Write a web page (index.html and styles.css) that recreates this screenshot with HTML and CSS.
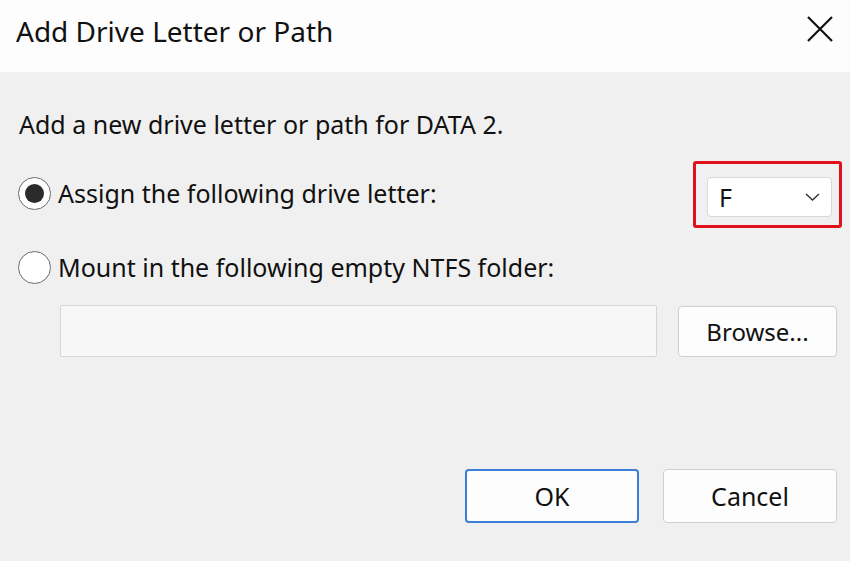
FILE: index.html
```html
<!DOCTYPE html>
<html>
<head>
    <title>Add Drive Letter or Path</title>
    <link rel="stylesheet" href="styles.css">
</head>
<body>
<div class="dialog">

    <!-- Title bar -->
    <div class="titlebar">
        <span class="title">Add Drive Letter or Path</span>
        <svg class="close" width="26" height="26" viewBox="0 0 26 26">
            <path d="M1 1 L25 25 M25 1 L1 25" stroke="#111" stroke-width="2.2" fill="none"/>
        </svg>
    </div>

    <div class="content">
        <p class="intro">Add a new drive letter or path for DATA 2.</p>

        <div class="row">
            <label class="option">
                <span class="radio checked"></span>
                Assign the following drive letter:
            </label>
            <div class="highlight">
                <div class="select">
                    <span>F</span>
                    <svg width="15" height="8" viewBox="0 0 15 8">
                        <path d="M1 1 L7.5 7 L14 1" stroke="#333" stroke-width="1.4" fill="none"/>
                    </svg>
                </div>
            </div>
        </div>

        <div class="row">
            <label class="option">
                <span class="radio"></span>
                Mount in the following empty NTFS folder:
            </label>
        </div>

        <div class="path-row">
            <div class="path-input"></div>
            <button class="btn browse">Browse...</button>
        </div>

        <div class="actions">
            <button class="btn primary">OK</button>
            <button class="btn">Cancel</button>
        </div>
    </div>
</div>
</body>
</html>
```

FILE: styles.css
```css
body {
    margin: 0;
    font-family: "Noto Sans", "Open Sans", sans-serif;
    color: #111;
    background-color: #f0f0f0;
}

.dialog {
    width: 850px;
    height: 561px;
    display: flex;
    flex-direction: column;
}

/* Title bar */
.titlebar {
    height: 72px;
    background-color: #fdfdfd;
    display: flex;
    align-items: center;
    justify-content: space-between;
    padding: 0 17px 0 16px;
}

.title {
    font-size: 28px;
    margin-top: -10px;
}

.close {
    margin-top: -14px;
}

/* Body */
.content {
    flex: 1;
    background-color: #f0f0f0;
    padding: 0 13px 0 18px;
}

.intro {
    font-size: 25px;
    margin: 36px 0 16px 1px;
    line-height: 32px;
}

.row {
    display: flex;
    align-items: center;
    justify-content: space-between;
    height: 74px;
}

.option {
    display: flex;
    align-items: center;
    gap: 7px;
    font-size: 25px;
}

.radio {
    width: 31px;
    height: 31px;
    border: 1.5px solid #6b6b6b;
    border-radius: 50%;
    background-color: #fff;
    position: relative;
}

.radio.checked::after {
    content: "";
    position: absolute;
    left: 6px;
    top: 6px;
    width: 19px;
    height: 19px;
    border-radius: 50%;
    background-color: #2b2b2b;
}

/* Red box around the drive letter picker */
.highlight {
    border: 3px solid #e0111b;
    border-radius: 3px;
    padding: 13px 7px 8px 11px;
    margin-right: -5px;
    margin-top: 2px;
}

.select {
    width: 125px;
    height: 40px;
    box-sizing: border-box;
    background-color: #fff;
    border: 1px solid #d8d8d8;
    border-radius: 4px;
    display: flex;
    align-items: center;
    justify-content: space-between;
    padding: 0 11px 0 11px;
    font-size: 25px;
}

.path-row {
    display: flex;
    align-items: center;
    gap: 21px;
    margin: 1px 0 0 42px;
}

.path-input {
    width: 597px;
    height: 52px;
    box-sizing: border-box;
    background-color: #f7f7f7;
    border: 1px solid #d6d6d6;
    border-radius: 2px;
}

/* Buttons */
.btn {
    font-family: inherit;
    font-size: 25px;
    color: #111;
    background-color: #fdfdfd;
    border: 1px solid #cfcfcf;
    border-radius: 4px;
    width: 174px;
    height: 54px;
}

.browse {
    width: 159px;
    height: 51px;
    font-size: 24px;
}

.actions {
    display: flex;
    justify-content: flex-end;
    gap: 24px;
    margin-top: 112px;
}

.btn.primary {
    border: 2px solid #3c7fd8;
}
```
